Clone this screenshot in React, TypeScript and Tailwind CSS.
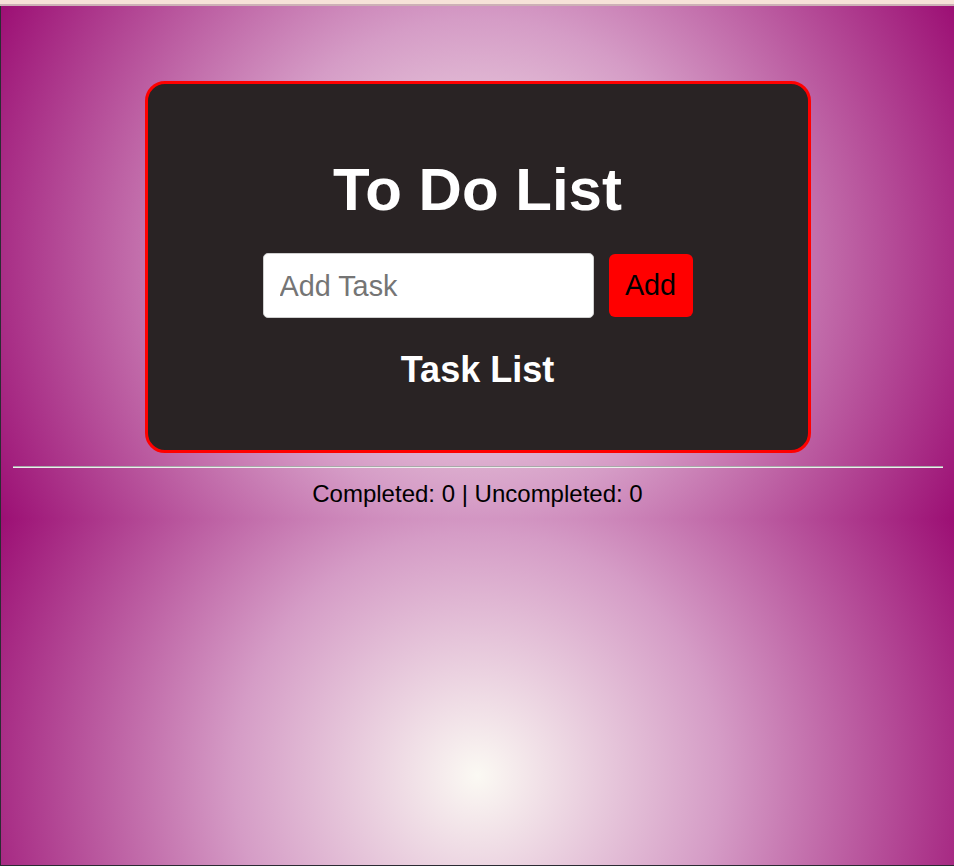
import React, { useState } from 'react';

interface Task {
  id: number;
  text: string;
  done: boolean;
}

const App: React.FC = () => {
  const [tasks, setTasks] = useState<Task[]>([]);
  const [value, setValue] = useState('');

  const addTask = () => {
    if (!value.trim()) return;
    setTasks([...tasks, { id: Date.now(), text: value.trim(), done: false }]);
    setValue('');
  };

  const completed = tasks.filter((t) => t.done).length;
  const uncompleted = tasks.length - completed;

  return (
    <div className="h-[866px] overflow-hidden flex flex-col font-['Liberation_Sans',Arial,sans-serif]">
      {/* window chrome strip */}
      <div className="h-[4px] bg-[#f6e2d8]" />
      <div className="h-[2px] bg-[#cdb0b6]" />

      <div className="flex-1 border-l border-b border-[#2b2b33] bg-[radial-gradient(circle,#fbf9f3_0%,#d59cc6_45%,#9c0f74_100%)] bg-[length:100%_513px] bg-repeat">
        <div className="pt-[75px]">
          <div className="mx-auto w-[666px] rounded-[20px] border-[3px] border-[#ff0000] bg-[#292324] pt-[71px] pb-[60px] flex flex-col items-center">
            <h1 className="text-[60px] leading-[69px] font-bold text-white">To Do List</h1>

            <div className="mt-[29px] flex items-center gap-[15px]">
              <input
                value={value}
                onChange={(e) => setValue(e.target.value)}
                placeholder="Add Task"
                className="w-[331px] h-[65px] rounded-[5px] border border-[#cfcfcf] bg-white px-[16px] pt-[2px] text-[28.8px] text-black placeholder:text-[#757575] outline-none"
              />
              <button
                onClick={addTask}
                className="w-[84px] h-[63px] rounded-[6px] bg-[#ff0000] text-[28.8px] text-black"
              >
                Add
              </button>
            </div>

            <h2 className="mt-[31px] text-[36px] leading-[41px] font-bold text-white">Task List</h2>
            {tasks.length > 0 && (
              <ul className="mt-4 text-white text-xl">
                {tasks.map((t) => (
                  <li key={t.id}>{t.text}</li>
                ))}
              </ul>
            )}
          </div>

          <div className="mt-[13px] ml-[12px] mr-[11px] h-[2px] border-t border-t-[#a9a9a9] border-b border-b-[#eeeeee]" />

          <p className="mt-[12px] text-center text-[24px] leading-[28px] text-black">
            Completed: {completed} | Uncompleted: {uncompleted}
          </p>
        </div>
      </div>
    </div>
  );
};

export default App;
